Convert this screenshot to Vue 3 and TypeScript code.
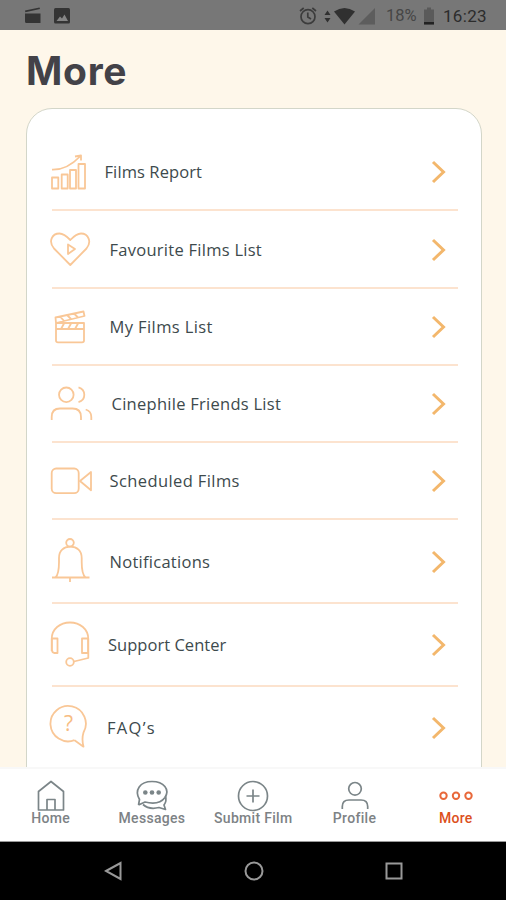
<script setup lang="ts">
interface MenuItem {
  key: string
  label: string
}

const items: MenuItem[] = [
  { key: 'report', label: 'Films Report' },
  { key: 'favourite', label: 'Favourite Films List' },
  { key: 'films', label: 'My Films List' },
  { key: 'friends', label: 'Cinephile Friends List' },
  { key: 'scheduled', label: 'Scheduled Films' },
  { key: 'notifications', label: 'Notifications' },
  { key: 'support', label: 'Support Center' },
  { key: 'faq', label: 'FAQ’s' },
]

const tabs: MenuItem[] = [
  { key: 'home', label: 'Home' },
  { key: 'messages', label: 'Messages' },
  { key: 'submit', label: 'Submit Film' },
  { key: 'profile', label: 'Profile' },
  { key: 'more', label: 'More' },
]
</script>

<template>
  <div class="screen">
    <header class="status">
      <svg class="status-left" width="50" height="20" viewBox="0 0 50 20">
        <path d="M1 7.500h15.500V17H2.500Q1 17 1 15.500Z M1 4.500L15.500 1.500L16 3L1.300 6.300Z" fill="#343434" />
        <rect x="30" y="2" width="16" height="15.500" rx="1.500" fill="#343434" />
        <path d="M32.500 15L36 10.500L38 12.500L40.500 8.500L44 15Z" fill="#858585" />
      </svg>
      <div class="status-right">
        <svg class="signals" width="78" height="20" viewBox="0 0 78 20">
          <g fill="none" stroke="#3c3c3c" stroke-width="1.700">
            <circle cx="9" cy="10.700" r="7" />
            <path d="M8.800 6.500V11L12 13M1 5L4.700 2M17 5L13.300 2" />
          </g>
          <path d="M25.500 9L28.500 4.500L31.500 9ZM25.500 12L28.500 16.500L31.500 12Z" fill="#303030" />
          <path d="M35 5.500Q45.500-1.500 56 5.500L45.500 18.500Z" fill="#303030" />
          <path d="M59.500 18.500H76V2Z" fill="#5d5d5d" />
        </svg>
        <span class="percent">18%</span>
        <svg class="battery" width="10" height="20" viewBox="0 0 10 20">
          <path d="M0 3.500H3V1.500H7V3.500H10V18.500H0Z" fill="#5a5a5a" />
          <path d="M0 16H10V18.500H0Z" fill="#222" />
        </svg>
        <span class="clock">16:23</span>
      </div>
    </header>

    <main class="content">
      <h1>More</h1>
      <section class="card">
        <div v-for="item in items" :key="item.key" class="row" :class="item.key">
          <svg class="icon" width="44" height="48" viewBox="0 0 44 48">
            <g v-if="item.key === 'report'">
              <path d="M2 29.500h6.300v11H2zM11.700 26.500h6v14h-6zM20 22h6v18.500h-6zM28.500 16h6.500v24.500h-6.500z" />
              <path d="M2 21.700C11 22 20 19 30.500 8M25 8.500L31 7.500L31 12.500" />
            </g>
            <g v-else-if="item.key === 'favourite'">
              <path d="M20.300 39L4 22.500C-2 15.500 2 7.500 9.500 7.500Q14 7.500 20.300 14Q26.500 7.500 31 7.500C38.500 7.500 42 16 36.500 22.500Z" />
              <path d="M18 18.500L25 23L18 28Z" />
            </g>
            <g v-else-if="item.key === 'films'">
              <path d="M6 20H34V37.500Q34 39.300 32 39.300H8Q6 39.300 6 37.500ZM6 26H34M6 20L5.500 14.500L33.500 8.500L34.500 13L6 20M10 13.500L14 17.800M17 12L21 16M24 10.500L28 14.500M11 26L14 20.500M18 26L21 20.500M25 26L28 20.500" />
            </g>
            <g v-else-if="item.key === 'friends'">
              <circle cx="16.300" cy="14.800" r="7.300" />
              <path d="M28.500 7.300Q34.300 9 34.300 14.800Q34.300 20.500 28.500 22.200M1.700 40V37Q1.700 28.500 10 28.500H22.500Q31 28.500 31 37V40M35.700 29.500Q41.300 31 41.300 37V40" />
            </g>
            <g v-else-if="item.key === 'scheduled'">
              <rect x="1.700" y="11.500" width="27" height="24.700" rx="4.500" />
              <path d="M30 24L41 15V33.300Z" />
            </g>
            <g v-else-if="item.key === 'notifications'">
              <circle cx="20" cy="4.800" r="3.800" />
              <path d="M2 39.500H39.500M5.500 39.500Q9 36 9 24V20C9 12.500 13.500 8.700 20.300 8.700S31.700 12.500 31.700 20V24Q31.700 36 35.500 39.500M20 40V44" />
            </g>
            <g v-else-if="item.key === 'support'">
              <path d="M1.700 30V18C1.700 8 10 1.500 20 1.500S38.300 8 38.300 18V37L24 40.500M2 17.500H7.500V32H4.500Q2 32 2 29ZM32 17.500H38V32H32Z" />
              <circle cx="20" cy="41" r="3.800" />
            </g>
            <g v-else>
              <path d="M25.500 36.200A17.700 17.700 0 1 1 34.500 28.500Q32.500 35 34.500 42.700L25.500 36.200" />
              <text x="19.500" y="26.500" text-anchor="middle">?</text>
            </g>
          </svg>
          <span class="label">{{ item.label }}</span>
          <svg class="chevron" width="16" height="24" viewBox="0 0 16 24">
            <path d="M2 2L12.500 12L2 22" />
          </svg>
        </div>
      </section>
    </main>

    <nav class="tabs">
      <div v-for="tab in tabs" :key="tab.key" class="tab" :class="{ active: tab.key === 'more' }">
        <svg width="40" height="32" viewBox="0 0 40 32">
          <path v-if="tab.key === 'home'" d="M7.500 11.500L20 1.500L32.500 11.500V30H7.500ZM16 30V19.500H24V30" />
          <g v-else-if="tab.key === 'messages'">
            <path d="M6.500 25L7.500 19.500C2 10 8 1.500 20 1.500C32 1.500 38 9.500 33 17.500Q27 25.500 13 22L6.500 25" />
            <path d="M11 24.500Q17 30 27 27.500L33.500 29.500L32 25Q35 21 33.500 16" />
            <g class="dots"><circle cx="13.300" cy="12.500" r="2.300" /><circle cx="20" cy="12.500" r="2.300" /><circle cx="26.700" cy="12.500" r="2.300" /></g>
          </g>
          <g v-else-if="tab.key === 'submit'">
            <circle cx="20" cy="16" r="14.500" />
            <path d="M20 9.500V22.500M13.500 16H26.500" />
          </g>
          <g v-else-if="tab.key === 'profile'">
            <circle cx="20" cy="8.800" r="6.300" />
            <path d="M7.300 29V26.500Q7.300 20 14 20H26Q32.700 20 32.700 26.500V29" />
          </g>
          <g v-else>
            <circle cx="7.500" cy="15.700" r="3.200" /><circle cx="20" cy="15.700" r="3.200" /><circle cx="32.500" cy="15.700" r="3.200" />
          </g>
        </svg>
        <span>{{ tab.label }}</span>
      </div>
    </nav>

    <footer class="system">
      <svg width="20" height="20" viewBox="0 0 20 20"><path d="M2 10L16.500 2V18Z" /></svg>
      <svg width="20" height="20" viewBox="0 0 20 20"><circle cx="10" cy="10" r="8.500" /></svg>
      <svg width="20" height="20" viewBox="0 0 20 20"><rect x="2.500" y="2.500" width="15" height="15" /></svg>
    </footer>
  </div>
</template>

<style>
body {
  margin: 0;
}
</style>

<style scoped>
.screen {
  display: flex;
  flex-direction: column;
  width: 506px;
  height: 900px;
  overflow: hidden;
  background: #fef7ea;
  font-family: Roboto, "Liberation Sans", sans-serif;
}
svg {
  display: block;
  flex: none;
}
.status {
  display: flex;
  align-items: center;
  justify-content: space-between;
  box-sizing: border-box;
  height: 30px;
  flex: none;
  padding: 1px 19px 0 24px;
  background: #777;
}
.status-right {
  display: flex;
  align-items: center;
  font-size: 17px;
  font-weight: 400;
}
.signals {
  margin-right: 9px;
}
.percent {
  width: 32px;
  color: #464646;
  font-size: 16.5px;
}
.battery {
  margin-left: 6px;
}
.clock {
  width: 44px;
  margin-left: 9px;
  color: #2c2c2c;
  letter-spacing: 0.3px;
  white-space: nowrap;
}
.content {
  display: flex;
  flex-direction: column;
  height: 737px;
  flex: none;
  overflow: hidden;
}
h1 {
  flex: none;
  height: 78px;
  margin: 0;
  padding-left: 26px;
  color: #434248;
  font: 700 39px/82px Inter, "Liberation Sans", sans-serif;
  letter-spacing: 0.7px;
}
.card {
  flex: none;
  box-sizing: border-box;
  width: 456px;
  height: 720px;
  margin-left: 26px;
  padding: 25px 23px 0 24px;
  border: 1.5px solid #d3d6c9;
  border-radius: 26px;
  background: #fff;
}
.row {
  display: flex;
  align-items: center;
  box-sizing: border-box;
  height: 77px;
  margin-left: 1px;
  padding-top: 1px;
  border-bottom: 2px solid #fce3cf;
}
.favourite {
  height: 78px;
}
.notifications {
  height: 84px;
}
.support {
  height: 83px;
}
.faq {
  height: 81px;
  border-bottom: 0;
}
.icon {
  margin-left: -2px;
  fill: none;
  stroke: #f9c797;
  stroke-width: 1.8;
  stroke-linejoin: round;
}
.faq .icon {
  margin-left: -3px;
}
.icon text {
  fill: #f7bc83;
  stroke: none;
  font: 21px "Open Sans", sans-serif;
}
.label {
  margin-left: 15.5px;
  color: #3d4a4d;
  font-family: "Open Sans", "Noto Sans", sans-serif;
  font-size: 16.5px;
  line-height: 24px;
  letter-spacing: 0.27px;
  white-space: nowrap;
}
.report .label {
  margin-left: 10.5px;
  letter-spacing: 0.1px;
}
.films .label,
.scheduled .label {
  letter-spacing: 0.4px;
}
.friends .label {
  margin-left: 17.5px;
}
.support .label {
  margin-left: 14px;
  letter-spacing: 0.03px;
}
.faq .label {
  margin-left: 14px;
  letter-spacing: 1.3px;
}
.chevron {
  margin-left: auto;
  margin-right: 11px;
  fill: none;
  stroke: #f3b76c;
  stroke-width: 3;
}
.tabs {
  display: grid;
  grid-template-columns: repeat(5, 101.3px);
  box-sizing: border-box;
  height: 75px;
  flex: none;
  padding-top: 11px;
  border-top: 2px solid #f8f8f8;
  border-bottom: 1px solid #999;
  background: #fff;
}
.tab {
  display: flex;
  flex-direction: column;
  align-items: center;
  color: #7d8285;
  font-size: 14px;
  font-weight: 500;
  line-height: 16px;
}
.tab span {
  margin-top: -2px;
  letter-spacing: 0.3px;
}
.tab svg {
  fill: none;
  stroke: #7b8588;
  stroke-width: 1.7;
  stroke-linejoin: round;
}
.tab .dots {
  fill: #7b8588;
  stroke: none;
}
.tab.active {
  color: #dc501c;
}
.tab.active svg {
  stroke: #e8683a;
  stroke-width: 2;
}
.system {
  display: flex;
  justify-content: center;
  gap: 120px;
  box-sizing: border-box;
  height: 58px;
  flex: none;
  padding: 19px 0 0 1px;
  background: #000;
}
.system svg {
  fill: none;
  stroke: #999;
  stroke-width: 2;
}
</style>
